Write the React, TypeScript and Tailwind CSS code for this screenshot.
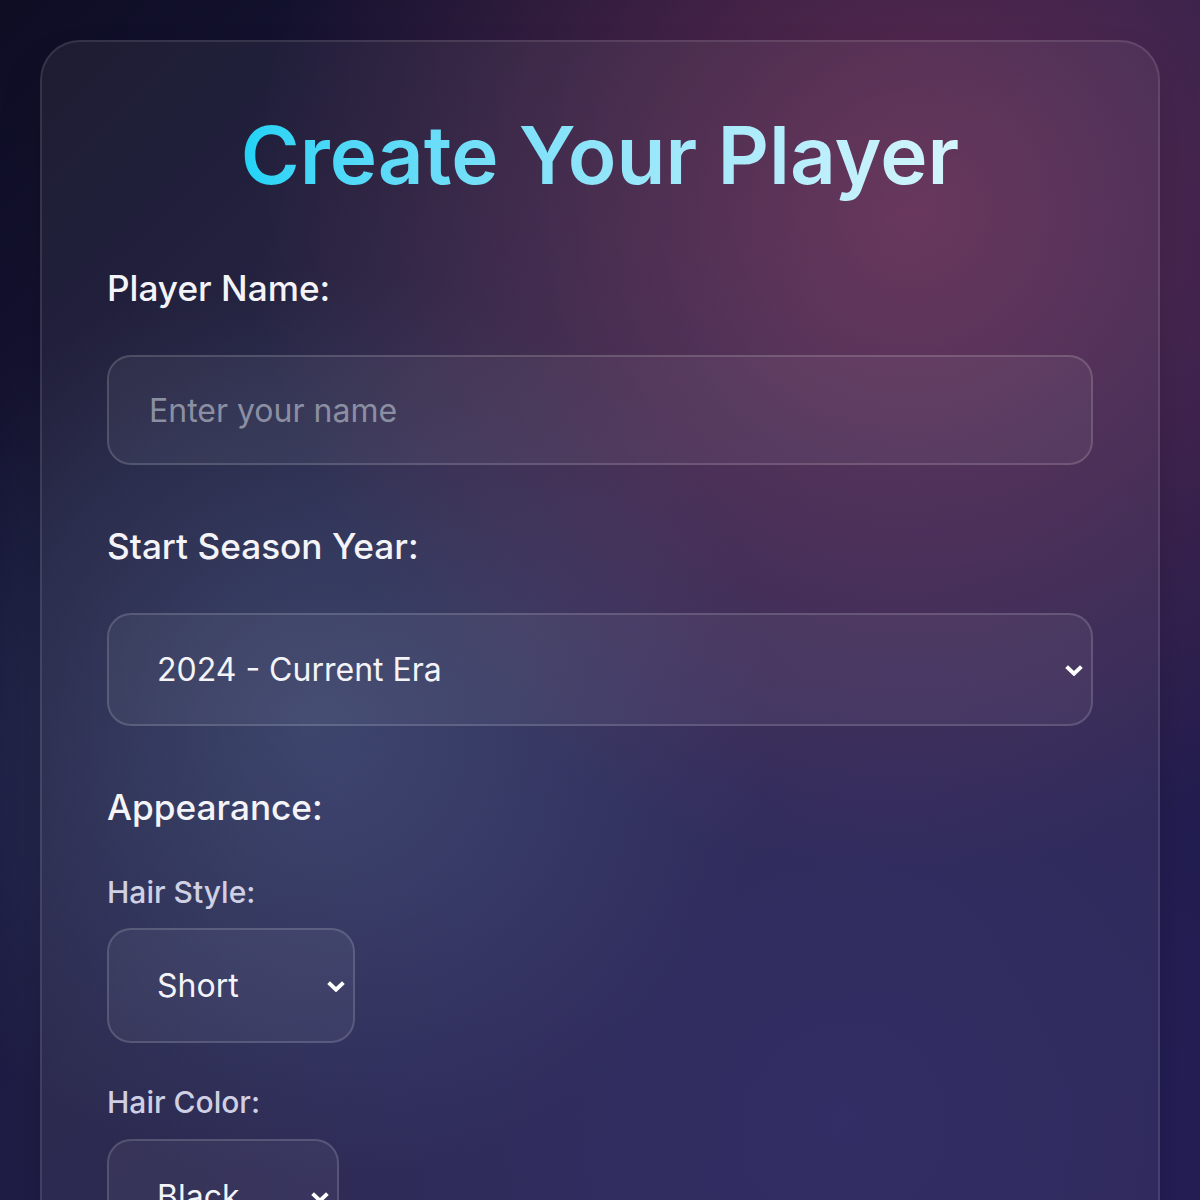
import React from "react"

const Chevron = () => (
  <svg
    width="20"
    height="12"
    viewBox="0 0 20 12"
    fill="none"
    className="pointer-events-none absolute right-[9px] top-1/2 -translate-y-1/2"
  >
    <path d="M2.6 2.6L10 9.6L17.4 2.6" stroke="white" strokeWidth="4" />
  </svg>
)

type SelectProps = {
  options: string[]
  className: string
}

const Select = ({ options, className }: SelectProps) => (
  <div className={`relative ${className}`}>
    <select className="h-full w-full appearance-none rounded-[24px] border-2 border-white/15 bg-white/[0.05] pl-[48px] pr-[40px] text-[32px] text-[#f3f3f8] outline-none">
      {options.map((o) => (
        <option key={o} className="bg-[#2b2a50]">
          {o}
        </option>
      ))}
    </select>
    <Chevron />
  </div>
)

const App = () => {
  return (
    <div className="min-h-screen bg-[radial-gradient(circle_at_76%_16%,rgba(150,55,95,0.55),transparent_46%),radial-gradient(circle_at_26%_55%,rgba(75,100,145,0.42),transparent_40%),radial-gradient(circle_at_70%_85%,rgba(45,38,110,0.5),transparent_50%),linear-gradient(135deg,#0e0d24_0%,#1f1d45_45%,#211b4d_100%)] px-10 pt-10 font-['Inter',sans-serif]">
      <div className="rounded-[40px] border-2 border-white/10 bg-white/[0.06] px-[65px] pb-16 pt-[65px] shadow-2xl">
        {/* Titulek */}
        <div className="mb-[59px] text-center">
          <h1 className="inline-block bg-linear-to-r from-[#1ed3f6] to-[#d4f5fc] bg-clip-text text-[80px] font-semibold leading-[96px] text-transparent">
            Create Your Player
          </h1>
        </div>

        {/* Jméno */}
        <div className="mb-[55px]">
          <label className="mb-[40px] block text-[35.2px] font-medium leading-[53px] text-[#f4f4f8]">
            Player Name:
          </label>
          <input
            type="text"
            placeholder="Enter your name"
            className="block h-[110px] w-full rounded-[24px] border-2 border-white/15 bg-white/[0.05] px-[40px] text-[32px] text-white outline-none placeholder:text-[#8b8fa2]"
          />
        </div>

        {/* Sezóna */}
        <div className="mb-[55px]">
          <label className="mb-[40px] block text-[35.2px] font-medium leading-[53px] text-[#f4f4f8]">
            Start Season Year:
          </label>
          <Select
            className="h-[113px] w-full"
            options={["2024 - Current Era", "2010 - Modern Era", "1996 - Classic Era", "1984 - Legends Era"]}
          />
        </div>

        {/* Vzhled */}
        <div>
          <h3 className="mb-[37px] text-[35.2px] font-medium leading-[53px] text-[#f4f4f8]">
            Appearance:
          </h3>
          <div className="mb-[38px]">
            <label className="mb-[14px] block text-[30px] font-medium leading-[43px] text-[#cfd0e4]">
              Hair Style:
            </label>
            <Select className="h-[115px] w-[248px]" options={["Short", "Long", "Curly", "Bald"]} />
          </div>
          <div>
            <label className="mb-[15px] block text-[30px] font-medium leading-[43px] text-[#cfd0e4]">
              Hair Color:
            </label>
            <Select className="h-[115px] w-[232px]" options={["Black", "Brown", "Blonde", "Red"]} />
          </div>
        </div>
      </div>
    </div>
  )
}

export default App
